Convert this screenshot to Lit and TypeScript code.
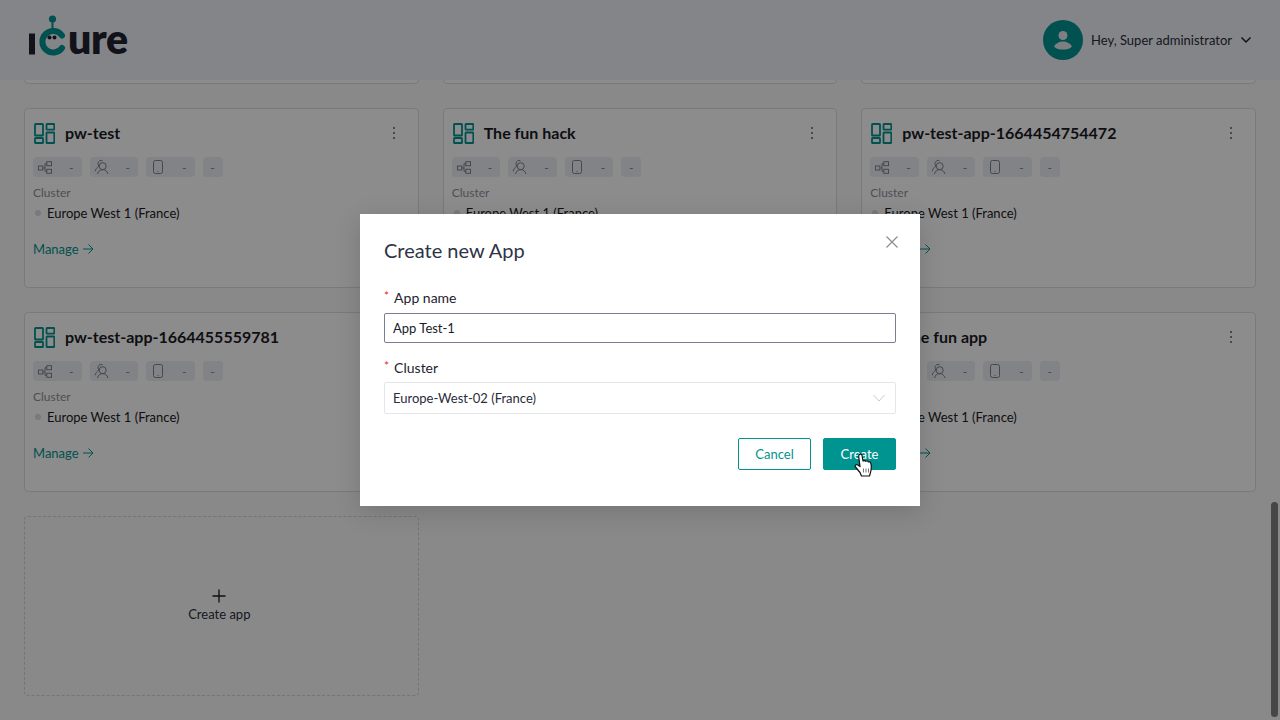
import { LitElement, html, css } from "lit";
import { customElement } from "lit/decorators.js";

const gridIcon = html`<svg class="gi" width="21" height="21" viewBox="0 0 21 21" fill="none" stroke="currentColor" stroke-width="1.800">
  <rect x="1" y="1" width="8" height="11.500" rx=".6"/><rect x="12.500" y="1" width="7.800" height="5.700" rx=".6"/>
  <rect x="1" y="15" width="8" height="5" rx=".6"/><rect x="12.500" y="9.500" width="7.800" height="10.500" rx=".6"/></svg>`;
const treeIcon = html`<svg width="16" height="16" viewBox="0 0 16 16" fill="none" stroke="currentColor" stroke-width="1"><rect x="1.500" y="7" width="4.300" height="4"/><rect x="9.800" y="2.700" width="4.700" height="4"/><rect x="9.800" y="10.300" width="4.700" height="4"/><path d="M5.800 9H8M8 4.700V12.300M8 4.700H9.800M8 12.300H9.800"/></svg>`;
const usersIcon = html`<svg width="16" height="16" viewBox="0 0 16 16" fill="none" stroke="currentColor" stroke-width="1"><circle cx="8.700" cy="7.200" r="3.500"/><path d="M3.500 15c.6-2.800 2.700-4.400 5.200-4.400s4.600 1.600 5.200 4.400M8.500 1.800C6.500 .8 4.200 2.200 4 4.400c-.1 1.100.3 2.100 1.100 2.800C3 8.200 1.500 10 1.200 12.300"/></svg>`;
const phoneIcon = html`<svg width="16" height="16" viewBox="0 0 16 16" fill="none" stroke="currentColor" stroke-width="1"><rect x="3.500" y="1.500" width="9" height="13" rx="2"/><path d="M7.500 12.500h1"/></svg>`;

const names = ["pw-test", "The fun hack", "pw-test-app-1664454754472", "pw-test-app-1664455559781", "", "The fun app"];

@customElement("app-card")
class AppCard extends LitElement {
  static properties = { name: {} };
  name = "";
  static styles = css`
    :host { display: block; }
    .card { box-sizing: border-box; height: 180px; background: #fff; border: 1px solid #dcdee3; border-radius: 4px; padding: 13px 8px 0 8px; }
    .head { display: flex; align-items: center; height: 22px; gap: 10px; padding-right: 7px; }
    .gi { color: #009490; flex: none; margin: 1px 0 0 1px; }
    .title { flex: 1; font-size: 16px; font-weight: 700; color: #1a1b26; white-space: nowrap; padding-bottom: 2px; }
    .more { display: flex; flex-direction: column; gap: 3px; padding-right: 8px; }
    .more i { width: 2px; height: 2px; border-radius: 50%; background: #5a5d6c; }
    .chips { display: flex; gap: 8px; margin-top: 13px; }
    .chip { display: flex; align-items: center; justify-content: space-between; box-sizing: border-box; width: 48.500px; height: 20px; padding: 0 8px 0 4px; background: #eceef4; border-radius: 4px; color: #7f828f; font-size: 12px; }
    .chip.s { width: 20px; padding: 0; justify-content: center; }
    .lab { margin-top: 9px; font-size: 12px; line-height: 14px; color: #8e919c; }
    .cl { display: flex; align-items: center; gap: 6px; margin-top: 5px; font-size: 13px; line-height: 16px; color: #1a1b26; }
    .dot { width: 6px; height: 6px; border-radius: 50%; background: #dcdee3; margin-left: 2px; }
    .mg { display: flex; align-items: center; gap: 3px; margin-top: 20px; font-size: 13px; line-height: 16px; color: #009490; }
  `;
  render() {
    return html`<div class="card">
      <div class="head">${gridIcon}<span class="title">${this.name}</span><span class="more"><i></i><i></i><i></i></span></div>
      <div class="chips">
        <span class="chip">${treeIcon}<span>-</span></span>
        <span class="chip">${usersIcon}<span>-</span></span>
        <span class="chip">${phoneIcon}<span>-</span></span>
        <span class="chip s">-</span>
      </div>
      <div class="lab">Cluster</div>
      <div class="cl"><span class="dot"></span>Europe West 1 (France)</div>
      <div class="mg">Manage <svg width="12" height="12" viewBox="0 0 12 12" fill="none" stroke="currentColor" stroke-width="1"><path d="M1 6h10M6.500 1.500 11 6l-4.500 4.500"/></svg></div>
    </div>`;
  }
}

@customElement("app-root")
export class AppRoot extends LitElement {
  static styles = css`
    :host { display: block; position: relative; width: 1280px; height: 720px; overflow: hidden; background: #fafafa; font-family: Lato, "Liberation Sans", sans-serif; }
    .hdr { position: absolute; z-index: 2; inset: 0 0 auto 0; height: 80px; background: #f0f2f8; display: flex; align-items: center; justify-content: space-between; padding: 0 28px; box-sizing: border-box; }
    .logo { display: flex; align-items: flex-start; height: 60px; margin-top: -1px; }
    .ure { font-size: 41px; font-weight: 800; line-height: 1; color: #1f2230; letter-spacing: -0.3px; margin: 8px 0 0 0; }
    .user { display: flex; align-items: center; gap: 8px; font-size: 13px; color: #2a2d3c; }
    .av { width: 40px; height: 40px; border-radius: 50%; background: #009490; display: block; }
    .grid { display: grid; grid-template-columns: repeat(3, 1fr); gap: 24px; padding: 0 24px; margin-top: -96px; }
    .stub { box-sizing: border-box; height: 180px; background: #fff; border: 1px solid #dcdee3; border-radius: 4px; }
    .add { box-sizing: border-box; height: 180px; border: 1px dashed #d2d4d9; border-radius: 4px; display: flex; flex-direction: column; align-items: center; justify-content: center; gap: 3px; padding: 0 4px 2px 0; font-size: 13px; color: #2a2d3c; }
    .thumb { position: absolute; z-index: 4; right: 2px; top: 502px; width: 7px; height: 215px; border-radius: 4px; background: #464646; }
    .mask { position: absolute; z-index: 3; inset: 0; background: rgba(0,0,0,.45); display: flex; align-items: center; justify-content: center; }
    .modal { position: relative; box-sizing: border-box; width: 560px; height: 292px; background: #fff; padding: 23px 24px 24px; box-shadow: 0 6px 24px rgba(0,0,0,.15); }
    h2 { margin: 0; font-size: 20px; font-weight: 400; line-height: 26px; color: #2e3347; }
    .x { position: absolute; top: 22px; right: 22px; width: 12px; height: 12px; display: block; }
    .f { display: flex; gap: 5px; font-size: 14px; line-height: 20px; color: #1f2230; }
    .f b { color: #f5222d; font-weight: 400; font-size: 12px; line-height: 16px; }
    .f1 { margin-top: 25px; }
    .f2 { margin-top: 15px; }
    .in { box-sizing: border-box; height: 30px; margin-top: 5px; border: 1px solid #7a7d96; border-radius: 2px; display: flex; align-items: center; padding: 0 8px; font-size: 13px; color: #1a1b26; }
    .sel { box-sizing: border-box; height: 32px; margin-top: 4px; border: 1px solid #e4e6ea; border-radius: 2px; display: flex; align-items: center; justify-content: space-between; padding: 0 10px 0 8px; font-size: 13px; color: #2a2d3c; }
    .btns { display: flex; justify-content: flex-end; gap: 12px; margin-top: 24px; }
    .btn { box-sizing: border-box; width: 73px; height: 32px; border-radius: 2px; border: 1px solid #009490; display: flex; align-items: center; justify-content: center; font-size: 13px; color: #009490; background: #fff; }
    .btn.p { background: #009490; color: #fff; }
    .cur { position: absolute; left: 494px; top: 239px; display: block; }
  `;
  render() {
    return html`
      <div class="grid">
        <div class="stub"></div><div class="stub"></div><div class="stub"></div>
        ${names.map((n) => html`<app-card .name=${n}></app-card>`)}
        <div class="add">
          <svg width="14" height="14" viewBox="0 0 14 14" stroke="#1a1b26" stroke-width="1.300"><path d="M7 .5v13M.5 7h13"/></svg>
          Create app
        </div>
      </div>
      <div class="hdr">
        <div class="logo">
          <svg width="40" height="50" viewBox="0 0 40 50" fill="none">
            <path d="M1 23.500h6v21H1z" fill="#1f2230"/>
            <circle cx="24.500" cy="9" r="3.600" fill="#009490"/>
            <path d="M24.500 10v9" stroke="#009490" stroke-width="2"/>
            <path d="M34 25.500A10.800 10.800 0 1 0 34 38" stroke="#009490" stroke-width="6" stroke-linecap="round"/>
            <circle cx="21.500" cy="27.500" r="2" fill="#1f2230"/><circle cx="26.500" cy="27.500" r="2" fill="#1f2230"/>
          </svg>
          <span class="ure">ure</span>
        </div>
        <div class="user">
          <svg class="av" viewBox="0 0 40 40"><circle cx="20" cy="15.500" r="4.500" fill="#e6e8ef"/><path d="M11 26.500c2-3.500 5.500-5 9-5s7 1.500 9 5c-2 2.500-5.500 3-9 3s-7-.5-9-3z" fill="#e6e8ef"/></svg>
          <span>Hey, Super administrator</span>
          <svg width="12" height="8" viewBox="0 0 12 8" fill="none" stroke="#1f2230" stroke-width="1.500"><path d="M1.500 1.500 6 6l4.500-4.500"/></svg>
        </div>
      </div>
      <div class="mask">
        <div class="modal">
          <h2>Create new App</h2>
          <svg class="x" viewBox="0 0 12 12" stroke="#8c8c8c" stroke-width="1.200"><path d="M.5.5l11 11M11.500.5l-11 11"/></svg>
          <div class="f f1"><b>*</b>App name</div>
          <div class="in">App Test-1</div>
          <div class="f f2"><b>*</b>Cluster</div>
          <div class="sel">Europe-West-02 (France)
            <svg width="12" height="8" viewBox="0 0 12 8" fill="none" stroke="#c8cad0" stroke-width="1"><path d="M.5 1 6 7l5.500-6"/></svg>
          </div>
          <div class="btns"><div class="btn">Cancel</div><div class="btn p">Create</div></div>
          <svg class="cur" width="20" height="25" viewBox="0 0 20 25">
            <path d="M5 2c1-1.300 2.700-1 3 .5l1 5.500c1-.7 2.200-.5 2.700.3 1-.6 2.200-.3 2.600.6 1-.4 2-.1 2.400 1 .8 2.500.8 6-.2 9.500l-1 3.600H7.500L6 19.500 1.500 14c-1-1.300.4-3 2-2.200l2.500 1.800L4.700 3.500c0-.5 0-1 .3-1.500z" fill="#fff" stroke="#111" stroke-width="1.200" stroke-linejoin="round"/>
            <path d="M9.500 15.500v4M12 15.500v4M14.500 15.500v4" stroke="#777" stroke-width="1"/>
          </svg>
        </div>
      </div>
      <div class="thumb"></div>
    `;
  }
}
